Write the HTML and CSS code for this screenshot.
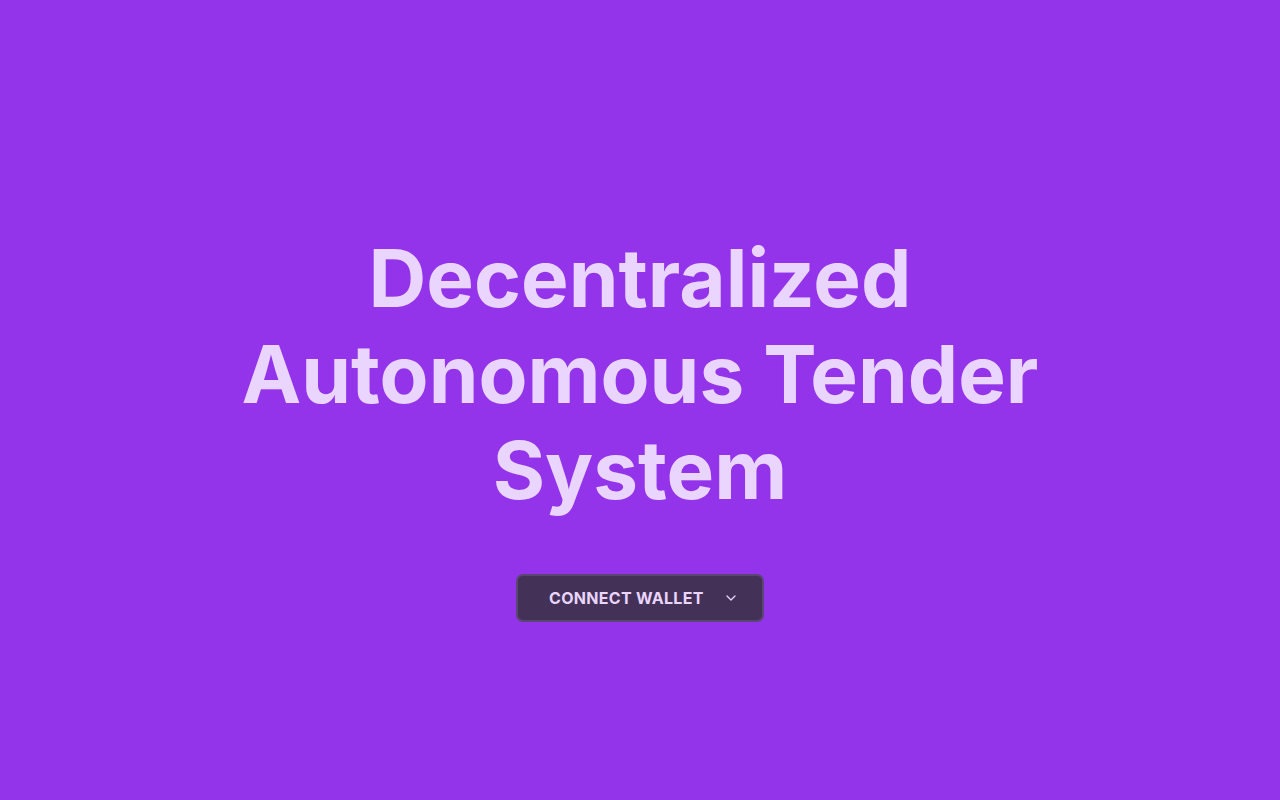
FILE: index.html
```html
<!DOCTYPE html>
<html lang="en">
<head>
<meta charset="utf-8">
<title>Decentralized Autonomous Tender System</title>
<link rel="stylesheet" href="styles.css">
</head>
<body>
<main class="hero">
  <h1 class="title">Decentralized Autonomous Tender System</h1>
  <button class="connect" type="button">
    <span class="connect-label">Connect Wallet</span>
    <svg class="chevron" width="10" height="6" viewBox="0 0 10 6" fill="none"><path d="M1 1l4 4 4-4" stroke="currentColor" stroke-width="1.3" stroke-linecap="round" stroke-linejoin="round"/></svg>
  </button>
</main>
</body>
</html>
```

FILE: styles.css
```css
* { box-sizing: border-box; }
html, body { margin: 0; padding: 0; }
body {
  background: #9333ea;
  font-family: Inter, "Noto Sans", sans-serif;
  color: #e9d5ff;
  min-height: 100vh;
}
.hero {
  min-height: 100vh;
  display: flex;
  flex-direction: column;
  align-items: center;
  justify-content: center;
  gap: 56px;
  padding-top: 52px;
}
.title {
  margin: 0;
  max-width: 896px;
  text-align: center;
  font-size: 80px;
  line-height: 96px;
  font-weight: 700;
  letter-spacing: 0;
  color: #e9d5ff;
}
.connect {
  display: flex;
  align-items: center;
  justify-content: space-between;
  width: 248px;
  height: 48px;
  padding: 0 26px 0 31px;
  background: #433157;
  border: 2px solid #5a4672;
  border-radius: 7px;
  color: #e9d5ff;
  font-family: Inter, sans-serif;
  font-size: 16px;
  font-weight: 700;
  letter-spacing: 0.3px;
  text-transform: uppercase;
  cursor: pointer;
}
.connect-label { text-align: left; }
.chevron { display: block; }
```
